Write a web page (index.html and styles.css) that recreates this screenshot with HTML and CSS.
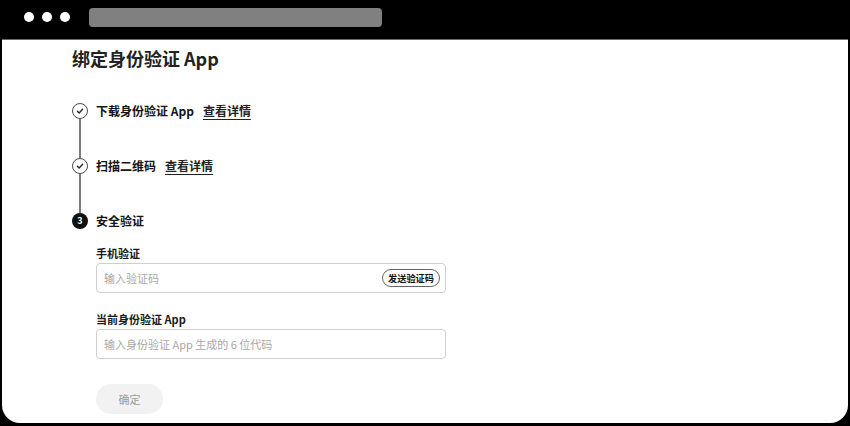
FILE: index.html
```html
<!DOCTYPE html>
<html lang="zh-CN">
<head>
<meta charset="utf-8">
<title>绑定身份验证 App</title>
<link rel="stylesheet" href="styles.css">
</head>
<body>
<div class="window">
  <header class="titlebar">
    <div class="dots"><span class="dot"></span><span class="dot"></span><span class="dot"></span></div>
    <div class="urlbar"></div>
  </header>
  <main class="panel">
    <h1 class="title">绑定身份验证 App</h1>
    <ol class="steps">
      <li class="step">
        <div class="marker">
          <span class="circle done">
            <svg viewBox="0 0 16 16" width="16" height="16"><path d="M5.4 8.3 L7.2 10 L10.6 6.2" fill="none" stroke="#222" stroke-width="1.3" stroke-linecap="round" stroke-linejoin="round"/></svg>
          </span>
          <span class="rail"></span>
        </div>
        <div class="step-body">
          <div class="step-label">下载身份验证 App<a class="link" href="#">查看详情</a></div>
        </div>
      </li>
      <li class="step">
        <div class="marker">
          <span class="circle done">
            <svg viewBox="0 0 16 16" width="16" height="16"><path d="M5.4 8.3 L7.2 10 L10.6 6.2" fill="none" stroke="#222" stroke-width="1.3" stroke-linecap="round" stroke-linejoin="round"/></svg>
          </span>
          <span class="rail"></span>
        </div>
        <div class="step-body">
          <div class="step-label">扫描二维码<a class="link" href="#">查看详情</a></div>
        </div>
      </li>
      <li class="step last">
        <div class="marker">
          <span class="circle current">3</span>
        </div>
        <div class="step-body">
          <div class="step-label">安全验证</div>
          <div class="field first">
            <label class="field-label">手机验证</label>
            <div class="input">
              <span class="placeholder">输入验证码</span>
              <button class="send" type="button">发送验证码</button>
            </div>
          </div>
          <div class="field">
            <label class="field-label">当前身份验证 App</label>
            <div class="input">
              <span class="placeholder">输入身份验证 App 生成的 6 位代码</span>
            </div>
          </div>
          <button class="confirm" type="button">确定</button>
        </div>
      </li>
    </ol>
  </main>
</div>
</body>
</html>
```
FILE: styles.css
```css
* { box-sizing: border-box; }
html, body {
  margin: 0;
  padding: 0;
  background: #000;
}
body {
  width: 850px;
  height: 426px;
  overflow: hidden;
  font-family: "Noto Sans CJK SC", "Noto Sans", "Liberation Sans", sans-serif;
  color: #1a1a1a;
}
.window {
  display: flex;
  flex-direction: column;
  height: 426px;
}
.titlebar {
  height: 39px;
  display: flex;
  align-items: center;
  padding-left: 24px;
  padding-bottom: 5px;
  gap: 19px;
}
.dots {
  display: flex;
  gap: 8px;
}
.dot {
  width: 10px;
  height: 10px;
  border-radius: 50%;
  background: #fff;
}
.urlbar {
  width: 293px;
  height: 19px;
  background: #808080;
  border-radius: 4px;
}
.panel {
  margin: 0 2px;
  height: 384px;
  background: #fff;
  border-top: 1px solid #6a6a6a;
  border-radius: 0 0 18px 18px;
  padding: 6px 0 0 70px;
}
.title {
  margin: 0;
  font-size: 18px;
  line-height: 24px;
  font-weight: 700;
  color: #222;
}
.steps {
  list-style: none;
  margin: 33px 0 0;
  padding: 0;
}
.step {
  display: flex;
  gap: 8px;
  min-height: 55px;
}
.step.last { min-height: 0; }
.marker {
  width: 16px;
  display: flex;
  flex-direction: column;
  align-items: center;
}
.circle {
  width: 16px;
  height: 16px;
  border-radius: 50%;
  flex: none;
  display: flex;
  align-items: center;
  justify-content: center;
}
.circle.done {
  border: 1.3px solid #4a4a4a;
  background: #fff;
}
.circle.done svg { display: block; margin: -1.3px; }
.circle.current {
  background: #111;
  color: #fff;
  font-size: 9px;
  font-weight: 700;
  line-height: 16px;
}
.rail {
  flex: 1;
  width: 1.5px;
  background: #7a7a7a;
}
.step-label {
  font-size: 12px;
  line-height: 16px;
  font-weight: 700;
  color: #151515;
  white-space: nowrap;
}
.link {
  margin-left: 9px;
  color: #222;
  text-decoration: underline;
  text-decoration-thickness: 1px;
  text-underline-offset: 3px;
}
.field { margin-top: 18px; }
.field.first { margin-top: 16px; }
.field-label {
  display: block;
  font-size: 11px;
  line-height: 16px;
  font-weight: 700;
  color: #1a1a1a;
  margin-bottom: 2px;
}
.input {
  width: 350px;
  height: 30px;
  border: 1px solid #cfcfcf;
  border-radius: 4px;
  display: flex;
  align-items: center;
  justify-content: space-between;
  padding: 0 5px 0 7px;
}
.placeholder {
  font-size: 11px;
  color: #a8a8a8;
}
.send {
  height: 18px;
  padding: 0 5px;
  border: 1px solid #666;
  border-radius: 9px;
  background: #fff;
  font-family: inherit;
  font-size: 9.2px;
  font-weight: 700;
  color: #111;
  line-height: 16px;
}
.confirm {
  margin-top: 25px;
  width: 67px;
  height: 30px;
  border: none;
  border-radius: 15px;
  background: #f2f2f2;
  color: #9c9c9c;
  font-family: inherit;
  font-size: 11px;
}
```
